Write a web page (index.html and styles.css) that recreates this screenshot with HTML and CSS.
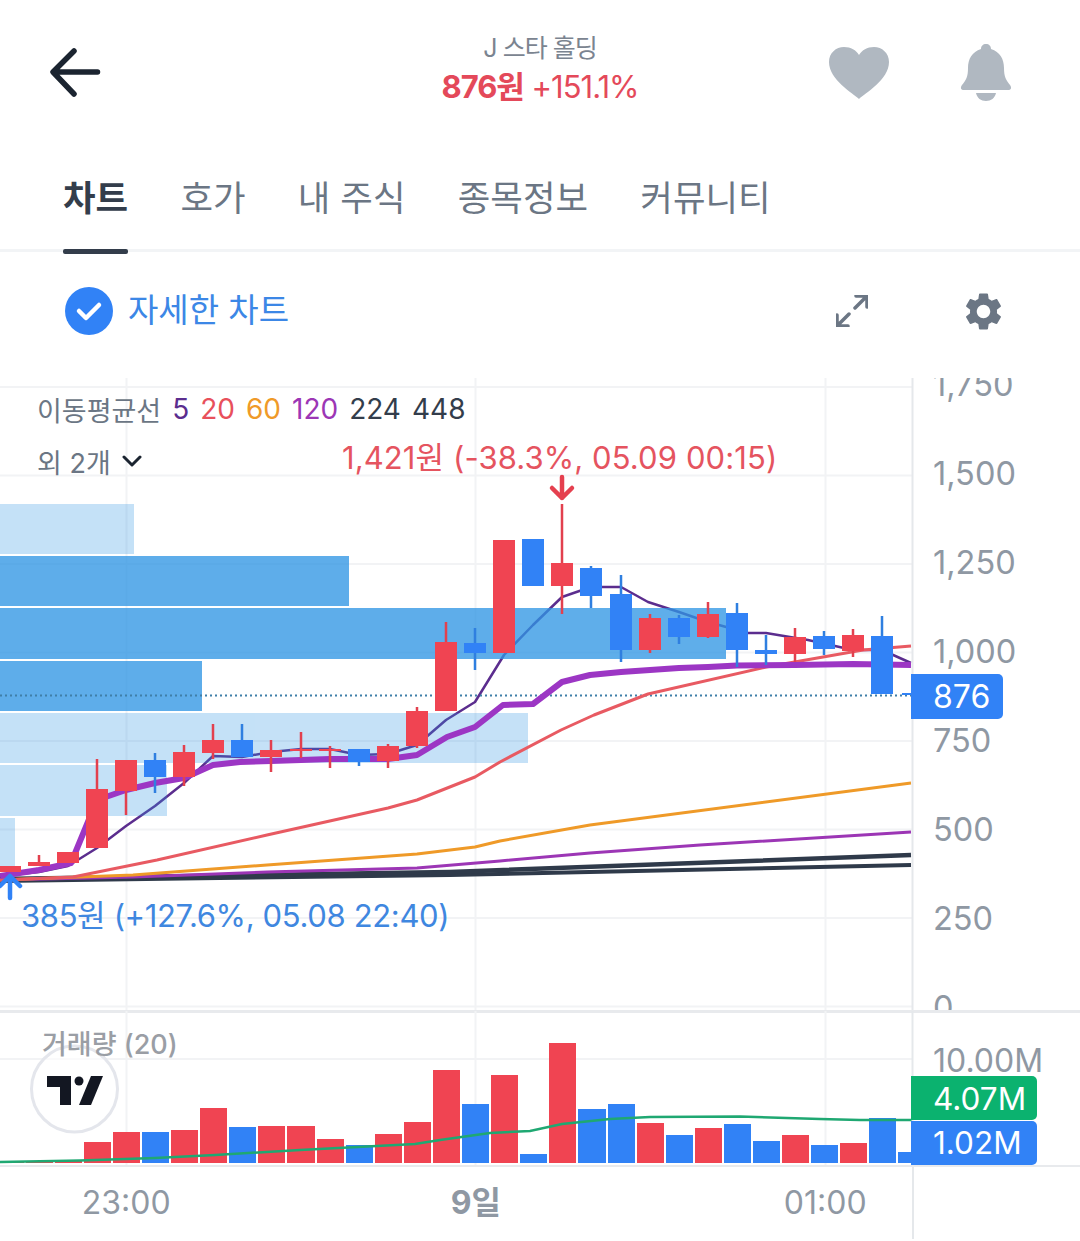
FILE: index.html
```html
<!DOCTYPE html>
<html lang="ko">
<head>
    <meta charset="UTF-8">
    <meta name="viewport" content="width=device-width, initial-scale=1.0">
    <title>J 스타 홀딩 차트</title>
    <link rel="stylesheet" href="styles.css">
</head>
<body>
    <header class="top-bar">
        <svg class="back-icon" viewBox="0 0 60 60"><path d="M52.500 27H9M29 6L8 27L29 49"/></svg>
        <div class="stock-title">
            <div class="stock-name">J 스타 홀딩</div>
            <div class="stock-price"><b>876원</b> +151.1%</div>
        </div>
        <div class="top-actions">
            <svg class="heart-icon" viewBox="0 0 60 52"><path d="M30 52C24 46 0 33 0 15C0 6 7 0 15 0C22 0 27 3 30 8C33 3 38 0 45 0C53 0 60 6 60 15C60 33 36 46 30 52Z"/></svg>
            <svg class="bell-icon" viewBox="0 0 52 58"><path d="M26 0C29 0 31 2 31 5C40 8 44 15 44 24C44 33 46 36 50 41C52 44 51 46 48 46H4C1 46 0 44 2 41C6 36 8 33 8 24C8 15 12 8 21 5C21 2 23 0 26 0ZM16 49H36C35 54 31 57 26 57C21 57 17 54 16 49Z"/></svg>
        </div>
    </header>

    <nav class="tabs">
        <a class="tab active">차트</a>
        <a class="tab">호가</a>
        <a class="tab">내 주식</a>
        <a class="tab">종목정보</a>
        <a class="tab">커뮤니티</a>
    </nav>

    <section class="toolbar">
        <div class="detail-toggle">
            <svg class="check-icon" viewBox="0 0 48 48"><circle cx="24" cy="24" r="24"/><path d="M14 24L21 31L34 18"/></svg>
            <span>자세한 차트</span>
        </div>
        <div class="toolbar-actions">
            <svg class="expand-icon" viewBox="0 0 32 32"><path d="M19 13L30 2M20 1H31V12M13 19L2 30M1 20V31H12"/></svg>
            <svg class="gear-icon" viewBox="0 0 24 24"><path d="M19.14 12.94c.04-.3.06-.61.06-.94 0-.32-.02-.64-.07-.94l2.03-1.58c.18-.14.23-.41.12-.61l-1.92-3.32c-.12-.22-.37-.29-.59-.22l-2.39.96c-.5-.38-1.03-.7-1.62-.94l-.36-2.54c-.04-.24-.24-.41-.48-.41h-3.84c-.24 0-.43.17-.47.41l-.36 2.54c-.59.24-1.13.57-1.62.94l-2.39-.96c-.22-.08-.47 0-.59.22L2.74 8.87c-.12.21-.08.47.12.61l2.03 1.58c-.05.3-.09.63-.09.94s.02.64.07.94l-2.03 1.58c-.18.14-.23.41-.12.61l1.92 3.32c.12.22.37.29.59.22l2.39-.96c.5.38 1.03.7 1.62.94l.36 2.54c.05.24.24.41.48.41h3.84c.24 0 .44-.17.47-.41l.36-2.54c.59-.24 1.13-.56 1.62-.94l2.39.96c.22.08.47 0 .59-.22l1.92-3.32c.12-.22.07-.47-.12-.61l-2.01-1.58zM12 15.6c-1.98 0-3.6-1.62-3.6-3.6s1.62-3.6 3.6-3.6 3.6 1.62 3.6 3.6-1.62 3.6-3.6 3.6z"/></svg>
        </div>
    </section>

    <section class="price-pane">
        <svg class="pane-svg" viewBox="0 378 1080 633">
            <!-- grid -->
            <path class="grid" d="M0 387H912M0 475.5H912M0 564H912M0 652.5H912M0 741H912M0 829.5H912M0 918H912M0 1006.5H912M126.500 378V1011M475.500 378V1011M825.500 378V1011"/>
            <!-- 5 -->
            <polyline class="ma ma5" points="0,876 39,872 68,866 97,848 126,826 155,806 184,783 213,756 242,757 271,752 301,749 330,749 359,755 388,754 417,745 446,720 475,702 504,655 533,625 562,597 591,587 621,587 648,602 679,612 708,622 748,633 766,633 808,640 853,650 882,650 911,663"/>
            <!-- 매물대 -->
            <g class="profile strong">
                <rect x="0" y="556" width="349" height="50"/>
                <rect x="0" y="608" width="726" height="51"/>
                <rect x="0" y="661" width="202" height="50"/>
            </g>
            <g class="profile light">
                <rect x="0" y="504" width="134" height="50"/>
                <rect x="0" y="713" width="528" height="50"/>
                <rect x="0" y="765" width="167" height="51"/>
                <rect x="0" y="818" width="15" height="50"/>
            </g>
            <path class="dots" d="M0 695.500H912"/>
            <polyline class="ma ma448" points="0,881 450,875 911,865"/>
            <polyline class="ma ma224" points="0,879 450,872 911,855"/>
            <polyline class="ma ma120" points="0,880 133,877 267,872 417,868 500,861 590,853 700,845 911,832"/>
            <polyline class="ma ma60" points="0,880 133,875 267,865 417,854 475,847 500,841 590,825 911,783"/>
            <polyline class="ma ma20" points="0,880 73,877 157,860 267,835 388,808 417,800 475,777 500,762 561,730 594,715 648,694 766,667 863,650 911,646"/>
            <polyline class="ma thick" points="0,876 39,870 71,863 97,800 126,790 155,783 184,778 213,765 240,762 271,761 301,760 330,759 388,759 417,755 447,737 475,727 503,705 533,704 562,682 590,675 621,672 650,670 679,668 708,667 737,665.500 795,665 853,664 911,665"/>
            <!-- 양봉 -->
            <g class="candles up">
                <path class="wick" d="M39 855V866M97 759V848M126 760V815M184 745V786M213 724V759M271 740V772M301 732V758M330 746V768M388 744V768M417 707V748M446 622V711M562 504V614M650 614V653M708 602V638M795 628V662M853 629V657"/>
                <rect x="0" y="866" width="21" height="6"/>
                <rect x="28" y="862" width="22" height="4"/>
                <rect x="57" y="852" width="22" height="11"/>
                <rect x="86" y="789" width="22" height="59"/>
                <rect x="115" y="760" width="22" height="31"/>
                <rect x="173" y="752" width="22" height="25"/>
                <rect x="202" y="740" width="22" height="13"/>
                <rect x="260" y="750" width="22" height="7"/>
                <rect x="290" y="749" width="22" height="2"/>
                <rect x="319" y="749" width="22" height="2"/>
                <rect x="377" y="746" width="22" height="15"/>
                <rect x="406" y="711" width="22" height="35"/>
                <rect x="435" y="642" width="22" height="69"/>
                <rect x="493" y="540" width="22" height="113"/>
                <rect x="551" y="563" width="22" height="23"/>
                <rect x="639" y="618" width="22" height="32"/>
                <rect x="697" y="614" width="22" height="23"/>
                <rect x="784" y="637" width="22" height="17"/>
                <rect x="842" y="635" width="22" height="16"/>
            </g>
            <!-- 음봉 -->
            <g class="candles down">
                <path class="wick" d="M155 753V793M242 724V757M359 749V766M475 628V670M591 566V608M621 575V662M679 615V644M737 603V667M766 635V665M824 631V655M882 616V694"/>
                <rect x="144" y="760" width="22" height="17"/>
                <rect x="231" y="740" width="22" height="17"/>
                <rect x="348" y="749" width="22" height="13"/>
                <rect x="464" y="643" width="22" height="10"/>
                <rect x="522" y="539" width="22" height="47"/>
                <rect x="580" y="568" width="22" height="28"/>
                <rect x="610" y="594" width="22" height="56"/>
                <rect x="668" y="618" width="22" height="19"/>
                <rect x="726" y="613" width="22" height="37"/>
                <rect x="755" y="650" width="22" height="4"/>
                <rect x="813" y="636" width="22" height="13"/>
                <rect x="871" y="636" width="22" height="58"/>
                <rect x="902" y="693" width="10" height="2"/>
            </g>
            <path class="mark-high" d="M562 477V498M552 488L562 498L572 488"/>
            <path class="mark-low" d="M10 898V876M0 886L10 876L20 886"/>
            <path class="axis-line" d="M912.500 378V1011"/>
        </svg>

        <div class="legend">
            <div class="legend-row">
                <span class="legend-name">이동평균선</span>
                <span class="c5">5</span><span class="c20">20</span><span class="c60">60</span><span class="c120">120</span><span class="c224">224</span><span class="c224">448</span>
            </div>
            <div class="legend-row">
                <span class="legend-name">외 2개</span>
                <svg class="chevron" viewBox="0 0 20 12"><path d="M2 2L10 10L18 2"/></svg>
            </div>
        </div>
        <div class="note note-high">1,421원 (-38.3%, 05.09 00:15)</div>
        <div class="note note-low">385원 (+127.6%, 05.08 22:40)</div>

        <div class="price-axis">
            <span>1,750</span><span>1,500</span><span>1,250</span><span>1,000</span><span>750</span><span>500</span><span>250</span><span>0</span>
        </div>
        <div class="price-tag">876</div>
    </section>

    <section class="volume-pane">
        <svg class="pane-svg" viewBox="0 1011 1080 154">
            <path class="grid" d="M0 1059H912M126.500 1011V1165M475.500 1011V1165M825.500 1011V1165"/>
            <g class="bars up">
                <rect x="0" y="1161" width="24" height="2"/>
                <rect x="26" y="1161" width="27" height="2"/>
                <rect x="55" y="1161" width="27" height="2"/>
                <rect x="84" y="1142" width="27" height="21"/>
                <rect x="113" y="1132" width="27" height="31"/>
                <rect x="171" y="1130" width="27" height="33"/>
                <rect x="200" y="1108" width="27" height="55"/>
                <rect x="258" y="1126" width="27" height="37"/>
                <rect x="287" y="1126" width="28" height="37"/>
                <rect x="317" y="1139" width="27" height="24"/>
                <rect x="375" y="1134" width="27" height="29"/>
                <rect x="404" y="1122" width="27" height="41"/>
                <rect x="433" y="1070" width="27" height="93"/>
                <rect x="491" y="1075" width="27" height="88"/>
                <rect x="549" y="1043" width="27" height="120"/>
                <rect x="637" y="1123" width="27" height="40"/>
                <rect x="695" y="1128" width="27" height="35"/>
                <rect x="782" y="1135" width="27" height="28"/>
                <rect x="840" y="1143" width="27" height="20"/>
            </g>
            <g class="bars down">
                <rect x="142" y="1132" width="27" height="31"/>
                <rect x="229" y="1127" width="27" height="36"/>
                <rect x="346" y="1145" width="27" height="18"/>
                <rect x="462" y="1104" width="27" height="59"/>
                <rect x="520" y="1154" width="27" height="9"/>
                <rect x="578" y="1109" width="28" height="54"/>
                <rect x="608" y="1104" width="27" height="59"/>
                <rect x="666" y="1135" width="27" height="28"/>
                <rect x="724" y="1124" width="27" height="39"/>
                <rect x="753" y="1141" width="27" height="22"/>
                <rect x="811" y="1145" width="27" height="18"/>
                <rect x="869" y="1118" width="27" height="45"/>
                <rect x="898" y="1152" width="14" height="11"/>
            </g>
            <polyline class="vol-ma" points="0,1162 80,1160.500 155,1158 215,1155 300,1150 415,1144 440,1140 490,1133 530,1131 562,1124 610,1119 650,1117 740,1116.500 820,1119 860,1120 912,1120"/>
            <circle class="logo-ring" cx="74.500" cy="1089" r="43"/>
            <g class="logo-mark">
                <path d="M47 1076H71V1105H60V1087H47Z"/>
                <circle cx="79" cy="1081" r="4.500"/>
                <path d="M91 1076H103L91 1105H79Z"/>
            </g>
            <path class="axis-line" d="M912.500 1011V1165"/>
        </svg>
        <div class="volume-title">거래량 (20)</div>
        <div class="volume-axis">10.00M</div>
        <div class="volume-tags">
            <div class="volume-tag green">4.07M</div>
            <div class="volume-tag blue">1.02M</div>
        </div>
    </section>

    <footer class="time-axis">
        <span>23:00</span>
        <span class="day">9일</span>
        <span>01:00</span>
    </footer>
</body>
</html>
```

FILE: styles.css
```css
* {
    box-sizing: border-box;
}
body {
    margin: 0;
    width: 1080px;
    height: 1241px;
    overflow: hidden;
    background-color: white;
    font-family: Inter, 'Noto Sans CJK KR', sans-serif;
}
svg {
    display: block;
}

/* 상단 */
.top-bar {
    display: grid;
    grid-template-columns: 1fr auto 1fr;
    align-items: center;
    height: 145px;
    padding: 0 45px;
}
.back-icon {
    width: 60px;
    height: 60px;
    margin-top: 5px;
    fill: none;
    stroke: #1b2430;
    stroke-width: 5.5;
    stroke-linecap: round;
    stroke-linejoin: round;
}
.stock-title {
    text-align: center;
    margin-bottom: 4px;
}
.stock-name {
    font-size: 25px;
    line-height: 32px;
    color: #7b8490;
    letter-spacing: -1px;
}
.stock-price {
    font-size: 31px;
    line-height: 46px;
    color: #e4495a;
    letter-spacing: -1px;
}
.stock-price b {
    font-weight: 700;
}
.top-actions {
    display: flex;
    justify-self: end;
    align-items: center;
    gap: 71px;
    margin-right: 23px;
}
.heart-icon {
    width: 60px;
    height: 52px;
    fill: #b0b8c1;
}
.bell-icon {
    width: 52px;
    height: 58px;
    fill: #b0b8c1;
}

/* 탭 */
.tabs {
    display: flex;
    gap: 52.3px;
    height: 107px;
    padding: 26px 0 0 63px;
    border-bottom: 3px solid #f2f4f6;
}
.tab {
    position: relative;
    font-size: 35.4px;
    line-height: 56px;
    color: #6b7684;
}
.tab.active {
    font-weight: 700;
    color: #333d4b;
}
.tab.active::after {
    content: "";
    position: absolute;
    left: 0;
    right: 0;
    top: 78px;
    height: 5px;
    border-radius: 2px;
    background-color: #333d4b;
}

/* 툴바 */
.toolbar {
    display: flex;
    justify-content: space-between;
    align-items: center;
    height: 126px;
    padding: 0 74px 8px 65px;
}
.detail-toggle {
    display: flex;
    align-items: center;
    gap: 15px;
    font-size: 33px;
    color: #3c87e6;
}
.detail-toggle span {
    margin-bottom: 6px;
}
.check-icon {
    width: 48px;
    height: 48px;
}
.check-icon circle {
    fill: #3182f6;
}
.check-icon path {
    fill: none;
    stroke: white;
    stroke-width: 4.5;
    stroke-linecap: round;
    stroke-linejoin: round;
}
.toolbar-actions {
    display: flex;
    align-items: center;
    gap: 93px;
}
.expand-icon {
    width: 32px;
    height: 32px;
    fill: none;
    stroke: #6b7684;
    stroke-width: 3.5;
    stroke-linecap: round;
    stroke-linejoin: round;
}
.gear-icon {
    width: 45px;
    height: 45px;
    fill: #6b7684;
}

/* 가격 차트 */
.price-pane {
    position: relative;
    height: 635px;
    overflow: hidden;
    border-bottom: 3px solid #e8eaed;
}
.pane-svg {
    position: absolute;
    left: 0;
    top: 0;
    width: 1080px;
}
.price-pane .pane-svg {
    height: 633px;
}
.volume-pane .pane-svg {
    top: -2px;
    height: 154px;
}
.grid {
    fill: none;
    stroke: #f2f3f5;
    stroke-width: 2;
}
.axis-line {
    fill: none;
    stroke: #e5e8eb;
    stroke-width: 2;
}
.dots {
    fill: none;
    stroke: #3f7fa8;
    stroke-width: 2;
    stroke-dasharray: 2 3;
}
.profile rect {
    fill: #2f95e4;
}
.profile.strong {
    opacity: 0.77;
}
.profile.light {
    opacity: 0.28;
}
.ma {
    fill: none;
    stroke-linejoin: round;
}
.ma5 {
    stroke: #5b2d8e;
    stroke-width: 2.5;
}
.ma20 {
    stroke: #e85a62;
    stroke-width: 3;
}
.ma60 {
    stroke: #ef9a28;
    stroke-width: 3;
}
.ma120 {
    stroke: #9c36b5;
    stroke-width: 3;
}
.ma224 {
    stroke: #2f3a4a;
    stroke-width: 4.5;
}
.ma448 {
    stroke: #2f3a4a;
    stroke-width: 4;
}
.thick {
    stroke: #9c36c4;
    stroke-width: 6;
}
.candles .wick {
    fill: none;
    stroke-width: 2.5;
}
.up rect {
    fill: #f04452;
}
.up .wick {
    stroke: #e2404e;
}
.down rect {
    fill: #3182f6;
}
.down .wick {
    stroke: #2f7fe0;
}
.mark-high,
.mark-low {
    fill: none;
    stroke-width: 4.5;
    stroke-linecap: round;
    stroke-linejoin: round;
}
.mark-high {
    stroke: #e5404f;
}
.mark-low {
    stroke: #3182f6;
}

/* 범례 */
.legend {
    position: absolute;
    left: 37px;
    top: 5px;
}
.legend-row {
    display: flex;
    align-items: center;
    gap: 11px;
    height: 52px;
    font-size: 28px;
}
.legend-name {
    font-size: 27px;
    color: #6b7684;
}
.c5 {
    color: #5b2d8e;
}
.c20 {
    color: #e8505b;
}
.c60 {
    color: #ef9a28;
}
.c120 {
    color: #9c36b5;
}
.c224 {
    color: #333d4b;
}
.chevron {
    width: 20px;
    height: 12px;
    fill: none;
    stroke: #1b2430;
    stroke-width: 3;
    stroke-linecap: round;
    stroke-linejoin: round;
}

.note {
    position: absolute;
    font-size: 31px;
    line-height: 40px;
    white-space: nowrap;
}
.note-high {
    left: 342px;
    top: 60px;
    color: #e5545f;
    letter-spacing: 0.1px;
}
.note-low {
    left: 21px;
    top: 518px;
    color: #3f87e0;
    letter-spacing: -0.35px;
}

/* 가격 축 */
.price-axis {
    position: absolute;
    left: 933px;
    top: -38px;
    display: flex;
    flex-direction: column;
    font-size: 32.5px;
    color: #8f98a3;
}
.price-axis span {
    height: 89px;
    line-height: 89px;
}
.price-tag {
    position: absolute;
    left: 911px;
    top: 296px;
    width: 92px;
    height: 45px;
    padding-left: 22px;
    border-radius: 0 5px 5px 0;
    background-color: #3182f6;
    color: white;
    font-size: 32px;
    line-height: 45px;
}

/* 거래량 */
.volume-pane {
    position: relative;
    height: 154px;
    border-bottom: 2px solid #e8eaed;
}
.logo-ring {
    fill: white;
    fill-opacity: 0.6;
    stroke: #e4e6ec;
    stroke-width: 3;
}
.logo-mark {
    fill: #131722;
}
.bars rect {
    shape-rendering: crispEdges;
}
.vol-ma {
    fill: none;
    stroke: #1fa872;
    stroke-width: 2.5;
}
.volume-title {
    position: absolute;
    left: 42px;
    top: 14px;
    font-size: 27px;
    line-height: 36px;
    font-weight: 500;
    color: #9a9ea5;
}
.volume-axis {
    position: absolute;
    left: 933px;
    top: 28px;
    font-size: 32px;
    line-height: 40px;
    color: #8f98a3;
}
.volume-tags {
    position: absolute;
    left: 911px;
    top: 63px;
    display: flex;
    flex-direction: column;
    gap: 1px;
    width: 126px;
}
.volume-tag {
    height: 44px;
    padding-left: 22px;
    border-radius: 0 5px 5px 0;
    color: white;
    font-size: 31.5px;
    line-height: 46px;
}
.volume-tag.green {
    background-color: #0bb26f;
}
.volume-tag.blue {
    background-color: #3182f6;
    line-height: 44px;
}

/* 시간 축 */
.time-axis {
    position: relative;
    display: flex;
    height: 74px;
    margin-left: -48.5px;
    padding-top: 16px;
    font-size: 32px;
    line-height: 40px;
    color: #8f98a3;
}
.time-axis span {
    width: 349.5px;
    text-align: center;
}
.time-axis .day {
    font-weight: 700;
}
.time-axis::after {
    content: "";
    position: absolute;
    left: 960.5px;
    top: 0;
    width: 2px;
    height: 72px;
    background-color: #e5e8eb;
}
```
